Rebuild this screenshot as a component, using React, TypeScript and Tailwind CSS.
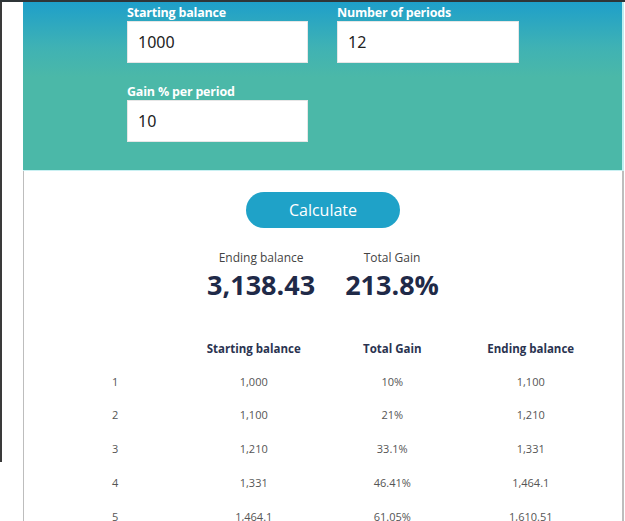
import React from "react";

const rows = [
  ["1", "1,000", "10%", "1,100"],
  ["2", "1,100", "21%", "1,210"],
  ["3", "1,210", "33.1%", "1,331"],
  ["4", "1,331", "46.41%", "1,464.1"],
  ["5", "1,464.1", "61.05%", "1,610.51"],
];

function Field({ label, value }: { label: string; value: string }) {
  return (
    <div className="flex flex-col">
      <div className="h-[16px] text-[12.5px] leading-[16px] font-bold text-white tracking-[-0.2px]">{label}</div>
      <div className="h-[42px] bg-white border border-[#e6e6e6] flex items-center pl-[10px] text-[16px] text-[#222] font-['Noto_Sans',sans-serif]">
        {value}
      </div>
    </div>
  );
}

export default function App() {
  return (
    <div className="w-[625px] h-[521px] overflow-hidden bg-white font-['Open_Sans',sans-serif]">
      <div className="h-[2px] bg-[#2f3538]" />
      <div className="flex">
        <div className="w-[23px] shrink-0">
          <div className="w-[2px] h-[460px] bg-[#3a3a3a]" />
        </div>
        <div className="w-[601px] flex flex-col">
          <div className="h-[168px] bg-[linear-gradient(to_bottom,#1e9fca_0px,#3fb2b4_45px,#4bb8a8_75px,#4bb8a8_100%)] border-r-[2px] border-[#bfeff2] pt-[3px] pl-[104px]">
            <div className="grid grid-cols-[181px_182px] gap-x-[29px] gap-y-[21px]">
              <Field label="Starting balance" value="1000" />
              <Field label="Number of periods" value="12" />
              <Field label="Gain % per period" value="10" />
            </div>
          </div>
          <div className="h-[1px] bg-[#c9f0f2]" />
          <div className="flex-1 border-l border-r-[2px] border-[#bdbdbd] pt-[21px] pb-[40px] flex flex-col items-center">
            <button className="w-[154px] h-[36px] rounded-full bg-[#1fa2c8] text-white text-[16px] leading-none">
              Calculate
            </button>
            <div className="mt-[21px] flex justify-center gap-[30px]">
              <div className="flex flex-col items-center">
                <div className="text-[12px] leading-[18px] text-[#444]">Ending balance</div>
                <div className="text-[27px] leading-[36px] font-bold text-[#1f2a48]">3,138.43</div>
              </div>
              <div className="flex flex-col items-center">
                <div className="text-[12px] leading-[18px] text-[#444]">Total Gain</div>
                <div className="text-[27px] leading-[36px] font-bold text-[#1f2a48]">213.8%</div>
              </div>
            </div>
            <div className="mt-[30px] w-full px-[22px]">
              <div className="grid grid-cols-4 h-[32px] items-center text-center text-[11.5px] font-bold text-[#2a3350]">
                <div />
                <div>Starting balance</div>
                <div>Total Gain</div>
                <div>Ending balance</div>
              </div>
              {rows.map((r) => (
                <div key={r[0]} className="grid grid-cols-4 h-[33.75px] items-center text-center text-[11px] text-[#555]">
                  {r.map((c, i) => (
                    <div key={i}>{c}</div>
                  ))}
                </div>
              ))}
            </div>
          </div>
        </div>
      </div>
    </div>
  );
}
